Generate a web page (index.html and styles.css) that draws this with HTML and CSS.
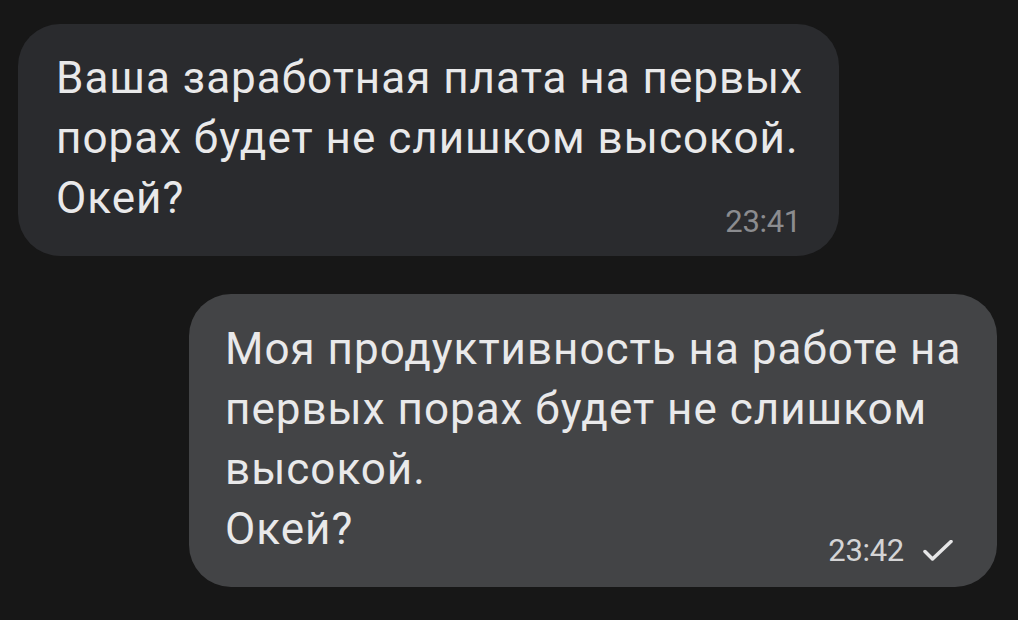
FILE: index.html
```html
<!DOCTYPE html>
<html lang="ru">
<head>
<meta charset="utf-8">
<title>Чат</title>
<link rel="stylesheet" href="styles.css">
</head>
<body>
<div class="chat">
  <div class="bubble bubble--in">
    <p class="text">Ваша заработная плата на первых<br>порах будет не слишком высокой.<br>Окей?</p>
    <div class="meta"><span class="time">23:41</span></div>
  </div>
  <div class="bubble bubble--out">
    <p class="text">Моя продуктивность на работе на<br>первых порах будет не слишком<br>высокой.<br>Окей?</p>
    <div class="meta">
      <span class="time">23:42</span>
      <svg class="check" width="30" height="22" viewBox="0 0 30 22" aria-hidden="true">
        <polyline points="2,11.5 9.5,19 28,1.5" fill="none" stroke="currentColor" stroke-width="3.5" stroke-linecap="round" stroke-linejoin="round"/>
      </svg>
    </div>
  </div>
</div>
</body>
</html>
```

FILE: styles.css
```css
html, body {
  margin: 0;
  padding: 0;
  background: #171717;
}

body {
  width: 1018px;
  height: 620px;
  overflow: hidden;
  font-family: Roboto, "Noto Sans", "DejaVu Sans", sans-serif;
}

.chat {
  display: flex;
  flex-direction: column;
  padding-top: 24px;
}

.bubble {
  display: flex;
  flex-direction: column;
  box-sizing: border-box;
  border-radius: 42px;
  color: #e9e9ea;
}

.bubble--in {
  width: 821px;
  margin-left: 18px;
  background: #2a2b2e;
  padding: 24px 38px 18px 38px;
}

.bubble--out {
  width: 808px;
  margin-left: 189px;
  margin-top: 38px;
  background: #434446;
  padding: 25px 38px 20px 36px;
}

.text {
  margin: 0;
  font-size: 44px;
  line-height: 60px;
  letter-spacing: 1px;
  white-space: nowrap;
}

.meta {
  align-self: flex-end;
  display: flex;
  align-items: center;
  gap: 19px;
  height: 32px;
}

.time {
  font-size: 31px;
  line-height: 32px;
  letter-spacing: -0.3px;
}

.bubble--in .meta {
  margin-top: -22px;
  color: #8b8c8f;
}

.bubble--out .meta {
  margin-top: -24px;
  margin-right: 6px;
  color: #d4d4d5;
}

.check {
  display: block;
  color: #e6e6e7;
}
```
